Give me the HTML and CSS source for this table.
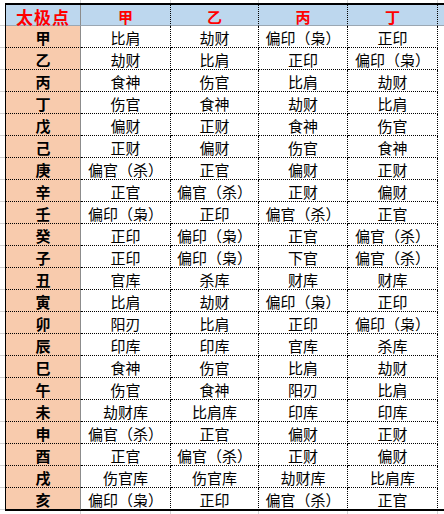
FILE: index.html
```html
<!DOCTYPE html>
<html lang="zh-CN">
<head>
<meta charset="utf-8">
<title>太极点</title>
<link rel="stylesheet" href="styles.css">
</head>
<body>
<div class="sheet">
  <div class="grid" role="table">
    <div class="cell hd corner">太极点</div>
    <div class="cell hd">甲</div>
    <div class="cell hd">乙</div>
    <div class="cell hd">丙</div>
    <div class="cell hd">丁</div>
    <div class="cell hd pad"></div>

    <div class="cell key">甲</div><div class="cell val">比肩</div><div class="cell val">劫财</div><div class="cell val">偏印（枭）</div><div class="cell val">正印</div><div class="cell pad"></div>
    <div class="cell key">乙</div><div class="cell val">劫财</div><div class="cell val">比肩</div><div class="cell val">正印</div><div class="cell val">偏印（枭）</div><div class="cell pad"></div>
    <div class="cell key">丙</div><div class="cell val">食神</div><div class="cell val">伤官</div><div class="cell val">比肩</div><div class="cell val">劫财</div><div class="cell pad"></div>
    <div class="cell key">丁</div><div class="cell val">伤官</div><div class="cell val">食神</div><div class="cell val">劫财</div><div class="cell val">比肩</div><div class="cell pad"></div>
    <div class="cell key">戊</div><div class="cell val">偏财</div><div class="cell val">正财</div><div class="cell val">食神</div><div class="cell val">伤官</div><div class="cell pad"></div>
    <div class="cell key">己</div><div class="cell val">正财</div><div class="cell val">偏财</div><div class="cell val">伤官</div><div class="cell val">食神</div><div class="cell pad"></div>
    <div class="cell key">庚</div><div class="cell val">偏官（杀）</div><div class="cell val">正官</div><div class="cell val">偏财</div><div class="cell val">正财</div><div class="cell pad"></div>
    <div class="cell key">辛</div><div class="cell val">正官</div><div class="cell val">偏官（杀）</div><div class="cell val">正财</div><div class="cell val">偏财</div><div class="cell pad"></div>
    <div class="cell key">壬</div><div class="cell val">偏印（枭）</div><div class="cell val">正印</div><div class="cell val">偏官（杀）</div><div class="cell val">正官</div><div class="cell pad"></div>
    <div class="cell key">癸</div><div class="cell val">正印</div><div class="cell val">偏印（枭）</div><div class="cell val">正官</div><div class="cell val">偏官（杀）</div><div class="cell pad"></div>
    <div class="cell key">子</div><div class="cell val">正印</div><div class="cell val">偏印（枭）</div><div class="cell val">下官</div><div class="cell val">偏官（杀）</div><div class="cell pad"></div>
    <div class="cell key">丑</div><div class="cell val">官库</div><div class="cell val">杀库</div><div class="cell val">财库</div><div class="cell val">财库</div><div class="cell pad"></div>
    <div class="cell key">寅</div><div class="cell val">比肩</div><div class="cell val">劫财</div><div class="cell val">偏印（枭）</div><div class="cell val">正印</div><div class="cell pad"></div>
    <div class="cell key">卯</div><div class="cell val">阳刃</div><div class="cell val">比肩</div><div class="cell val">正印</div><div class="cell val">偏印（枭）</div><div class="cell pad"></div>
    <div class="cell key">辰</div><div class="cell val">印库</div><div class="cell val">印库</div><div class="cell val">官库</div><div class="cell val">杀库</div><div class="cell pad"></div>
    <div class="cell key">巳</div><div class="cell val">食神</div><div class="cell val">伤官</div><div class="cell val">比肩</div><div class="cell val">劫财</div><div class="cell pad"></div>
    <div class="cell key">午</div><div class="cell val">伤官</div><div class="cell val">食神</div><div class="cell val">阳刃</div><div class="cell val">比肩</div><div class="cell pad"></div>
    <div class="cell key">未</div><div class="cell val">劫财库</div><div class="cell val">比肩库</div><div class="cell val">印库</div><div class="cell val">印库</div><div class="cell pad"></div>
    <div class="cell key">申</div><div class="cell val">偏官（杀）</div><div class="cell val">正官</div><div class="cell val">偏财</div><div class="cell val">正财</div><div class="cell pad"></div>
    <div class="cell key">酉</div><div class="cell val">正官</div><div class="cell val">偏官（杀）</div><div class="cell val">正财</div><div class="cell val">偏财</div><div class="cell pad"></div>
    <div class="cell key">戌</div><div class="cell val">伤官库</div><div class="cell val">伤官库</div><div class="cell val">劫财库</div><div class="cell val">比肩库</div><div class="cell pad"></div>
    <div class="cell key last">亥</div><div class="cell val last">偏印（枭）</div><div class="cell val last">正印</div><div class="cell val last">偏官（杀）</div><div class="cell val last">正官</div><div class="cell pad last"></div>
  </div>
</div>
</body>
</html>
```

FILE: styles.css
```css
html, body {
  margin: 0;
  padding: 0;
  background: #ffffff;
}

.sheet {
  width: 444px;
  height: 514px;
  overflow: hidden;
  box-sizing: border-box;
  padding: 3px 0 0 5px;
  background-color: #ffffff;
  background-image:
    linear-gradient(#d4d4d4, #d4d4d4),
    linear-gradient(#d4d4d4, #d4d4d4),
    linear-gradient(#d4d4d4, #d4d4d4),
    linear-gradient(#d4d4d4, #d4d4d4),
    linear-gradient(#d4d4d4, #d4d4d4),
    repeating-linear-gradient(180deg, transparent 0, transparent 21px, #d4d4d4 21px, #d4d4d4 22px);
  background-size: 1px 100%, 1px 100%, 1px 100%, 1px 100%, 1px 100%, 100% 100%;
  background-position: 80px 0, 170px 0, 258px 0, 347px 0, 437px 0, 0 4px;
  background-repeat: no-repeat, no-repeat, no-repeat, no-repeat, no-repeat, no-repeat;
  font-family: "Noto Sans CJK SC", "Noto Sans", sans-serif;
  color: #000000;
}

.grid {
  display: grid;
  grid-template-columns: 75px 90px 88px 89px 90px 1fr;
  grid-template-rows: 21px repeat(22, 22px);
  border-top: 2px solid #000000;
  border-left: 1px solid #000000;
  border-bottom: 1px solid #000000;
}

.cell {
  box-sizing: border-box;
  display: flex;
  align-items: center;
  justify-content: center;
  padding-top: 2px;
  border-bottom: 1px dotted #000000;
  border-right: 1px dotted #000000;
  white-space: nowrap;
  font-size: 15px;
  line-height: 1;
  background: #ffffff;
}

.hd {
  background: #bdd7ee;
  color: #ff0000;
  font-weight: bold;
  border-bottom: 1px solid #9aa7b3;
}

.corner {
  font-size: 17px;
  letter-spacing: 1px;
}

.key {
  background: #f8cbad;
  font-weight: bold;
  border-right: 1px solid #8c8c8c;
}

.hd.corner {
  background: #bdd7ee;
  border-right: 1px solid #8c8c8c;
}

.pad {
  border-right: 0;
  border-bottom: 0;
}

.hd.pad {
  border-bottom: 1px solid #9aa7b3;
}

.last {
  border-bottom: 1px solid #000000;
}
```
